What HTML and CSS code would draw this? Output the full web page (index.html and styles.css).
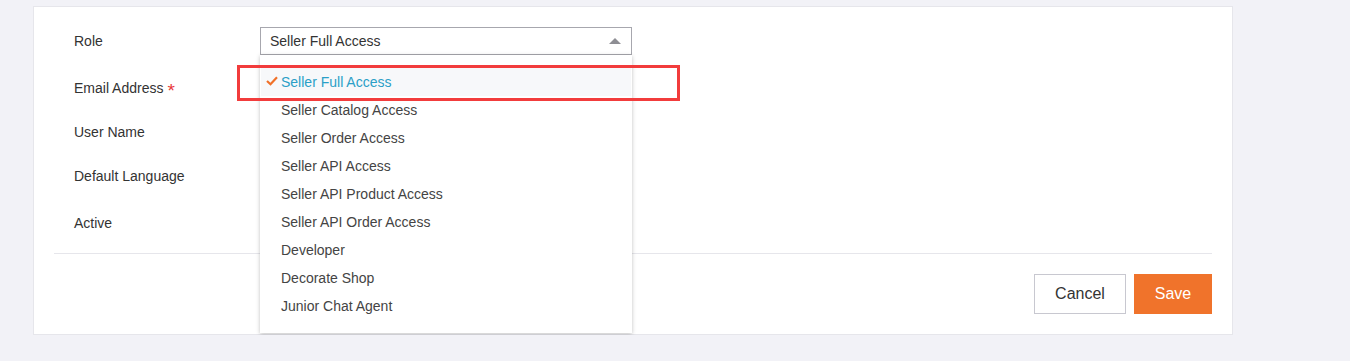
FILE: index.html
```html
<!DOCTYPE html>
<html lang="en">
<head>
    <meta charset="UTF-8">
    <meta name="viewport" content="width=device-width, initial-scale=1.0">
    <title>Edit User</title>
    <link rel="stylesheet" href="styles.css">
</head>
<body>
    <div class="card">
        <form class="user-form">
            <div class="form-row row-role">
                <label class="form-label">Role</label>
                <div class="form-control">
                    <div class="select select-open">
                        <span>Seller Full Access</span>
                        <span class="arrow-up"></span>
                    </div>
                    <ul class="dropdown">
                        <li class="selected">
                            <svg class="check" width="12" height="10" viewBox="0 0 12 10"><path d="M1 5 L4.5 8.3 L11 1.2" fill="none" stroke="#f07028" stroke-width="2.2"/></svg>
                            Seller Full Access
                        </li>
                        <li>Seller Catalog Access</li>
                        <li>Seller Order Access</li>
                        <li>Seller API Access</li>
                        <li>Seller API Product Access</li>
                        <li>Seller API Order Access</li>
                        <li>Developer</li>
                        <li>Decorate Shop</li>
                        <li>Junior Chat Agent</li>
                    </ul>
                </div>
            </div>

            <div class="form-row row-email">
                <label class="form-label">Email Address <span class="required">*</span></label>
                <div class="form-control"><input class="input" type="text"></div>
            </div>

            <div class="form-row row-name">
                <label class="form-label">User Name</label>
                <div class="form-control"><input class="input" type="text"></div>
            </div>

            <div class="form-row row-lang">
                <label class="form-label">Default Language</label>
                <div class="form-control"><div class="input"></div></div>
            </div>

            <div class="form-row row-active">
                <label class="form-label">Active</label>
                <div class="form-control"></div>
            </div>

            <div class="form-footer">
                <button type="button" class="btn btn-cancel">Cancel</button>
                <button type="button" class="btn btn-save">Save</button>
            </div>
        </form>
    </div>

    <!-- marca de anotación -->
    <div class="highlight-box"></div>
</body>
</html>
```

FILE: styles.css
```css
/* General */
body {
    font-family: Arial, "Liberation Sans", sans-serif;
    font-size: 14px;
    margin: 0;
    padding: 0;
    background-color: #f2f2f7;
    color: #333;
}

/* Card */
.card {
    width: 1198px;
    margin: 6px 0 0 33px;
    background: white;
    border: 1px solid #e6e6eb;
}

.user-form {
    padding: 20px 20px 20px 20px;
}

/* Rows */
.form-row {
    display: flex;
    align-items: center;
    height: 28px;
    padding-left: 20px;
}

.row-role { margin-bottom: 19px; }
.row-email { margin-bottom: 16px; }
.row-name { margin-bottom: 16px; }
.row-lang { margin-bottom: 19px; }
.row-active { margin-bottom: 16px; }

.form-label {
    width: 186px;
    line-height: 28px;
}

.required {
    color: #e83a3a;
    font-size: 19px;
    line-height: 14px;
    vertical-align: -4px;
}

.form-control {
    position: relative;
    width: 372px;
    height: 28px;
}

.input {
    display: block;
    box-sizing: border-box;
    width: 100%;
    height: 28px;
    margin: 0;
    border: 1px solid #c4c4cc;
    background: white;
}

/* Select */
.select {
    box-sizing: border-box;
    height: 28px;
    border: 1px solid #a7a7ae;
    padding: 0 9px;
    line-height: 26px;
    display: flex;
    justify-content: space-between;
    align-items: center;
}

.arrow-up {
    width: 0;
    height: 0;
    border-left: 6px solid transparent;
    border-right: 6px solid transparent;
    border-bottom: 6px solid #8e8e94;
    margin-right: 1px;
}

/* Dropdown */
.dropdown {
    position: absolute;
    top: 28px;
    left: 0;
    z-index: 5;
    width: 372px;
    box-sizing: border-box;
    margin: 0;
    padding: 13px 0 13px 0;
    list-style: none;
    background: white;
    box-shadow: 0 1px 4px rgba(0, 0, 0, 0.25);
}

.dropdown li {
    position: relative;
    height: 28px;
    line-height: 28px;
    padding-left: 21px;
    color: #444;
}

.dropdown li.selected {
    color: #2b9fc7;
    background-color: #f7f8fa;
    margin: 0 1px;
    padding-left: 20px;
}

.check {
    position: absolute;
    left: 5px;
    top: 8px;
}

/* Footer */
.form-footer {
    border-top: 1px solid #e6e6eb;
    padding-top: 20px;
    display: flex;
    justify-content: flex-end;
    gap: 8px;
}

.btn {
    height: 40px;
    font-family: Arial, "Liberation Sans", sans-serif;
    font-size: 16px;
    border-radius: 0;
    cursor: pointer;
}

.btn-cancel {
    width: 92px;
    background: white;
    color: #333;
    border: 1px solid #c8c8d0;
}

.btn-save {
    width: 78px;
    background: #f0732b;
    color: white;
    border: none;
}

/* Annotation */
.highlight-box {
    position: absolute;
    left: 237px;
    top: 65px;
    width: 437px;
    height: 30px;
    border: 3px solid #f23c3c;
    z-index: 10;
}
```
